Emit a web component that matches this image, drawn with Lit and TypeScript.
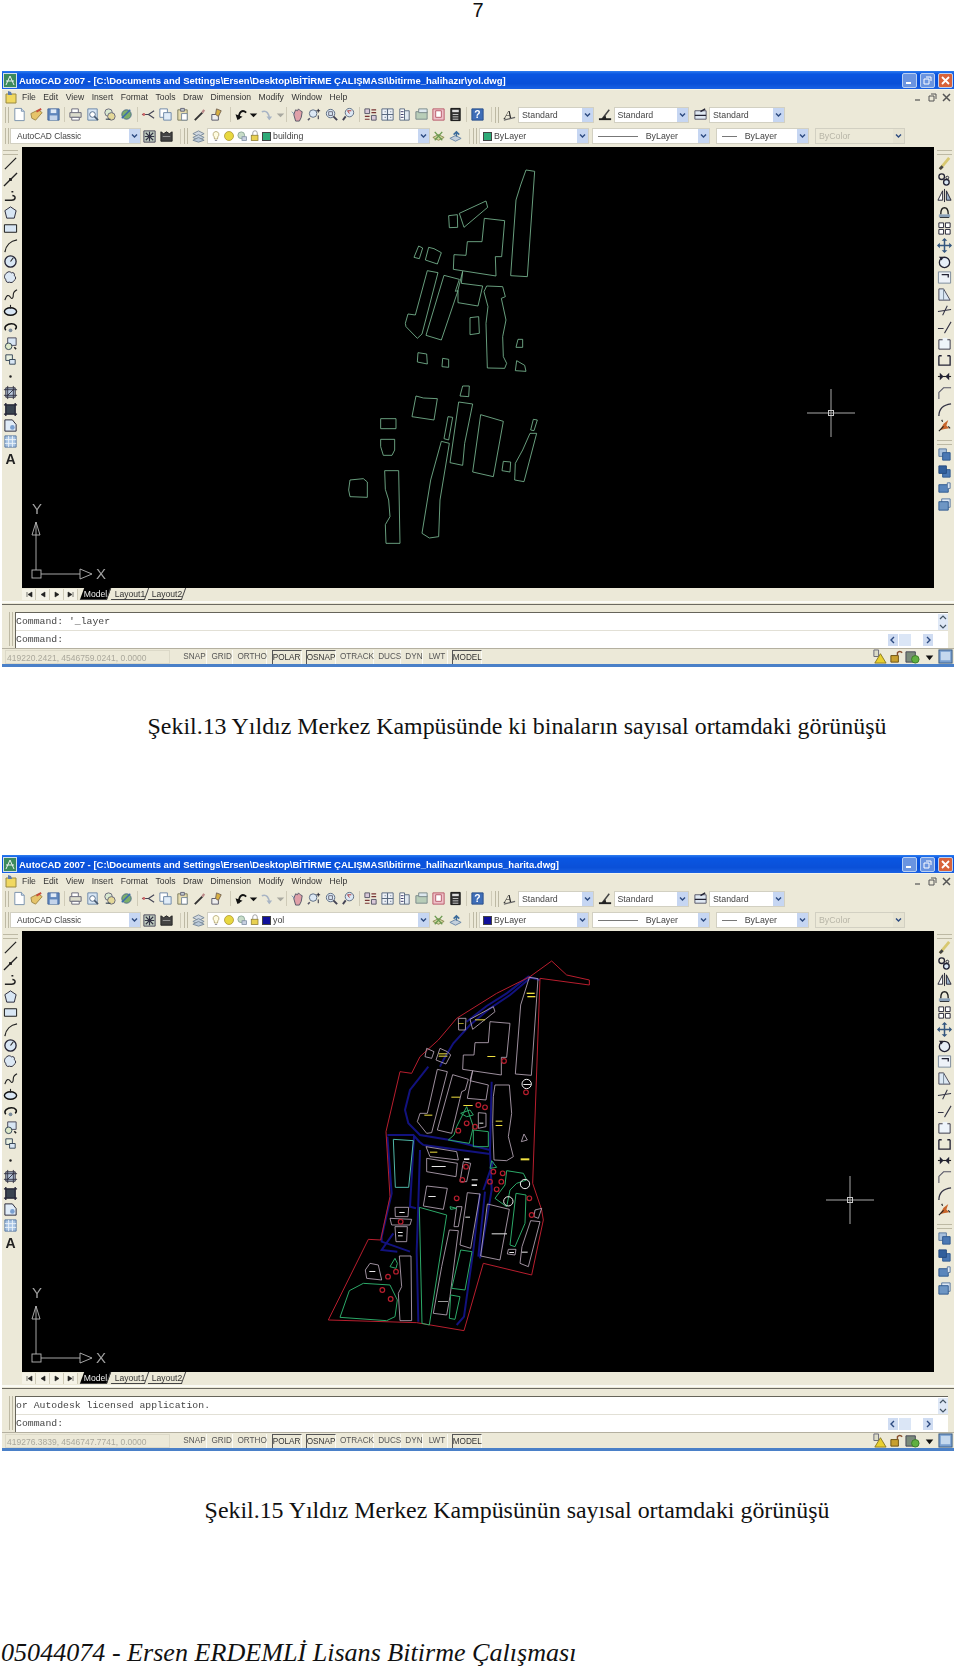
import { LitElement, html, css, svg } from 'lit'

const line = (d: string, w = 1.2, c = '#222') => svg`<path d=${d} fill="none" stroke=${c} stroke-width=${w}/>`
const box = (d: string, f: string, c = '#5a6a80') => svg`<path d=${d} fill=${f} stroke=${c} stroke-width="1"/>`

const ICONS: Record<string, any> = {
  // standard toolbar
  new: svg`${box('M3 1.5h7l3 3v10H3z', '#fff', '#7890ac')}${box('M10 1.5v3h3', '#d4e2f0', '#7890ac')}`,
  open: svg`${box('M2 7l8-4 4 3-7 8-4-2z', '#e6c46a', '#a08848')}${line('M8 5l5-3', 2, '#c84a3a')}`,
  save: svg`${box('M2 2h12v12H2z', '#5f86bc', '#44689c')}<rect x="5" y="2.5" width="6" height="4" fill="#e0eaf6"/><rect x="4" y="9" width="8" height="5" fill="#c4d4ea"/>`,
  plot: svg`${box('M4 6V2h7v4', '#fff', '#667')}${box('M2 6h12v5H2z', '#dcdccc', '#667')}${box('M4 11h8v3H4z', '#fff', '#667')}`,
  preview: svg`${box('M3 2h10v12H3z', '#d8e6f4', '#6a86a8')}<circle cx="8" cy="8" r="3" fill="#fff" stroke="#506a8a"/>${line('M10 10l4 4', 1.6, '#44556a')}`,
  publish3d: svg`<circle cx="7" cy="6" r="4" fill="#d8e8d0" stroke="#667"/><circle cx="10" cy="10" r="4" fill="#e4d898" stroke="#667"/>${line('M4 13h5', 1.2, '#345')}`,
  publish: svg`<circle cx="8" cy="8" r="5" fill="#7cae6a" stroke="#4a6a8a"/>${line('M3 12l9-9', 1.6, '#3a6ab0')}`,
  cut: svg`${line('M1 8h7M8 8l6-4M8 8l6 4', 1.2, '#445')}<circle cx="3" cy="8" r="1.5" fill="#c66"/>`,
  copy: svg`${box('M2 2h8v9H2z', '#fff', '#6c86a6')}${box('M6 6h8v8H6z', '#e0ecf8', '#6c86a6')}`,
  paste: svg`${box('M3 3h10v11H3z', '#e6dcae', '#7c7c60')}${box('M6 1.5h4v3H6z', '#c0c8d0', '#667')}${box('M7 7h6v7H7z', '#fff', '#7a8a9a')}`,
  match: svg`${line('M3 14l8-8', 2, '#333')}${line('M11 6l2-3', 2.4, '#b88')}`,
  blockedit: svg`${box('M3 8h7v6H3z', '#eee', '#556')}${box('M8 2l5 2-3 6-3-2z', '#d8b040', '#765')}`,
  undo: svg`${line('M13 6C9 2 5 5 5 13', 2, '#111')}<path d="M1 9l4 5 4-5z" fill="#111" transform="rotate(20 5 10)"/>`,
  redo: svg`${line('M3 5c5-2 8 2 8 8', 1.6, '#a8b4c4')}<path d="M8 10l3 4 3-4z" fill="#a8b4c4"/>`,
  dropDark: svg`<path d="M4 7h8l-4 4z" fill="#111"/>`,
  dropLight: svg`<path d="M4 7h8l-4 4z" fill="#a8a8a0"/>`,
  pan: svg`${box('M4 8l2-5 2 1 1-2 2 2 2 1-1 6-2 4H6z', '#e0a0a8', '#556')}${line('M2 5l3 3', 1, '#6a86a8')}`,
  zoomrt: svg`<circle cx="6.5" cy="7" r="4" fill="#dce8f4" stroke="#5a6a80"/>${line('M12 2v4M10 4h4M12 9v4', 1, '#223')}${line('M3 12l-2 2', 1.6, '#556')}`,
  zoomwin: svg`<circle cx="7" cy="7" r="4.5" fill="#dce8f4" stroke="#5a6a80"/>${line('M10 10l4 4', 2, '#445')}${line('M5 5h4v4H5z', 1, '#667')}`,
  zoomprev: svg`<circle cx="9" cy="6" r="4.5" fill="#dce8f4" stroke="#5a6a80"/>${line('M5 10l-3 4', 2, '#445')}${line('M11 4H7l2 3', 1, '#a33')}`,
  props: svg`${box('M2 2h5v5H2zM9 9h5v5H9z', '#d8c8d8', '#556')}${line('M9 3h5M9 6h5M2 10h5M2 13h5', 1.2, '#733')}`,
  dc: svg`${box('M2 2h12v12H2z', '#eef2f8', '#5a6a80')}${line('M2 8h12M8 2v12M5 5h1M11 5h1M5 11h1M11 11h1', 1.2, '#5a6a80')}`,
  palette: svg`${box('M3 2h5v12H3z', '#fff', '#5a6a80')}${box('M8 4h5v10H8z', '#e0e8f0', '#5a6a80')}${line('M4 5h3M4 8h3M4 11h3', 1, '#336')}`,
  sheet: svg`${box('M2 5h12v8H2z', '#b8cdb8', '#7a8a8a')}${box('M5 2h9v4H5z', '#dde8ee', '#7a8a8a')}`,
  markup: svg`${box('M2 2h12v12H2z', '#eec0c8', '#b85868')}${box('M5 4h6v7H5z', '#fff', '#b85868')}`,
  calc: svg`${box('M3 1.5h10v13H3z', '#333', '#111')}<rect x="4.5" y="3" width="7" height="2.5" fill="#ddd"/>${line('M5 8h6M5 10.5h6M5 13h6', 1, '#ccc')}`,
  help: svg`${box('M2 2h12v12H2z', '#3f6eb8', '#2a4f8a')}<text x="8" y="12" text-anchor="middle" font-size="11" font-weight="700" font-family="Liberation Sans" fill="#fff">?</text>`,
  textstyle: svg`<text x="2" y="13" font-size="14" font-style="italic" font-family="Liberation Serif" fill="#222">A</text>${line('M2 14l12-3', 1.4, '#666')}`,
  dimstyle: svg`${line('M1 13h13', 2, '#222')}${line('M5 12l7-9', 1.6, '#444')}<path d="M3 13l5-4 1 4z" fill="#222"/>`,
  tablestyle: svg`${box('M2 4h12v9H2z', '#dfe8f2', '#556')}${line('M8 5l5-3M2 9h12', 1.4, '#223')}`,
  // layers and workspace
  wsSettings: svg`${box('M2 2h12v12H2z', '#c0ccc0', '#445')}${line('M4 4l8 8M12 4l-8 8M8 3v10M3 8h10', 1.2, '#334')}`,
  wsLock: svg`<path d="M2 3l3 2 3-2 3 2 3-2v10H2z" fill="#444" stroke="#222"/>${line('M4 8h8', 1, '#999')}`,
  layerPanel: svg`${box('M8 2l6 3-6 3-6-3z', '#d0d8e0', '#7a8a9a')}${box('M8 6l6 3-6 3-6-3z', '#c4d0dc', '#7a8a9a')}${box('M8 9l6 3-6 2-6-2z', '#b8c8d8', '#7a8a9a')}`,
  layerMake: svg`${box('M8 6l6 3-6 3-6-3z', '#d0d8a0', '#8a8a50')}${line('M4 3l8 9M12 3l-8 9', 1.4, '#6a9a50')}`,
  layerPrev: svg`${box('M8 7l6 3-6 3-6-3z', '#c4d0dc', '#6a86a8')}${line('M6 6l3-3 3 3M9 3v5', 1.6, '#3a6a9a')}`,
  bulb: svg`<path d="M8 2a4 4 0 0 1 2.5 7L10 12H6L5.5 9A4 4 0 0 1 8 2z" fill="#fffce0" stroke="#a89a60"/>${line('M6.5 14h3', 1.2, '#889')}`,
  sun: svg`<circle cx="8" cy="8" r="6" fill="#e8d840" stroke="#a89030"/>`,
  freeze: svg`<circle cx="7" cy="7" r="4.5" fill="#c8dcc8" stroke="#7a9a8a"/><rect x="8" y="9" width="6" height="5" fill="#c8d0e0" stroke="#7a8aa0"/>`,
  padlock: svg`<path d="M5 7V4a3 3 0 0 1 6 0v3" fill="none" stroke="#888"/><rect x="3" y="7" width="9" height="7" fill="#e8d050" stroke="#8a7a30"/>`,
  // draw toolbar
  lineTool: line('M2 14L14 2', 1.4),
  xline: svg`${line('M1 15L15 1', 1.4)}<rect x="6.5" y="6.5" width="3" height="3" fill="#222"/>`,
  pline: line('M2 13h7c5 0 5-5 1-5M9 4h2', 1.6),
  polygon: box('M8 2l6 4-2 8H4L2 6z', '#d8e6f4', '#223'),
  rect: box('M1.5 4h13v8h-13z', '#d8e6f4', '#111'),
  arc: line('M2 15C3 8 8 3 15 2', 1.4),
  circle: svg`<circle cx="8" cy="8" r="6" fill="#d8e6f4" stroke="#223" stroke-width="1.4"/>${line('M8 8l3-4', 1.2)}`,
  cloud: box('M4 3c2-2 4-1 5 0 2-1 4 1 3 3 2 1 2 4 0 5-1 2-3 3-5 2-3 1-4-1-4-3-2-1-2-5 1-7z', '#dce8f4', '#223'),
  spline: line('M2 14c2-6 4-6 6-3s3 0 3-3 2-4 4-5', 1.2),
  ellipse: svg`<ellipse cx="8" cy="9" rx="6.5" ry="4" fill="#d8e6f4" stroke="#111" stroke-width="1.5"/>${line('M8 2v4', 1.2)}`,
  ellipseArc: svg`<path d="M3 11C0 7 5 4 9 4s7 3 4 6" fill="none" stroke="#111" stroke-width="1.6"/><circle cx="8" cy="11" r="2" fill="#7a8a9a"/>`,
  insert: svg`${box('M5 2h9v8H5z', '#d8e6f4', '#445')}<circle cx="6" cy="11" r="3.5" fill="#dce8c8" stroke="#345"/>${line('M12 12l2 2', 1.6)}`,
  block: svg`${box('M3 3h7v6H3z', '#e8f0e0', '#345')}${box('M7 8h6v5H7z', '#d8e6f4', '#345')}`,
  point: svg`<circle cx="8" cy="8" r="1.3" fill="#222"/>`,
  hatch: svg`${box('M3 3h10v10H3z', '#b8c8dc', '#223')}${line('M1 5h14M1 11h14M5 1v14M11 1v14M4 12l8-8', 1, '#334')}`,
  gradient: svg`<rect x="3" y="3" width="10" height="10" fill="#3a4450"/>${line('M1 3h14M1 13h14M3 1v14M13 1v14', 1.4, '#223')}`,
  region: svg`${box('M2 2h8l4 5v7H2z', '#e0ecf8', '#223')}<circle cx="10" cy="10" r="2.5" fill="#7aa0d0"/>`,
  table: svg`${box('M2 2h12v12H2z', '#a8c4e4', '#5a78a0')}${line('M2 6h12M2 10h12M6 2v12M10 2v12', 1, '#eef4fa')}`,
  mtext: svg`<text x="8" y="14" text-anchor="middle" font-size="15" font-weight="700" font-family="Liberation Sans" fill="#222">A</text>`,
  // modify toolbar
  erase: svg`${line('M3 14L13 2', 3, '#d8c870')}${line('M3 14l3-3', 3, '#444')}`,
  copyObj: svg`<circle cx="5" cy="5" r="3" fill="none" stroke="#223" stroke-width="1.4"/><circle cx="10" cy="11" r="3" fill="#d8e6f4" stroke="#223" stroke-width="1.4"/><circle cx="11" cy="6" r="1.5" fill="none" stroke="#223"/>`,
  mirror: svg`${box('M1 13l5-10v10z', '#fff', '#223')}${box('M15 13l-5-10v10z', '#9ab0c8', '#223')}${line('M8 1v14', 1, '#223')}`,
  offset: svg`${line('M3 13h10M4 10c0-5 1-7 4-7s4 2 4 7', 1.5)}<rect x="2" y="10" width="12" height="3" fill="#8aa0b8"/>`,
  array: svg`${box('M2 2h5v5H2zM9 2h5v5H9zM2 9h5v5H2zM9 9h5v5H9z', '#fff', '#223')}`,
  move: svg`${line('M8 1v14M1 8h14', 1.6, '#35577f')}<path d="M8 0l3 3H5zM8 16l3-3H5zM0 8l3-3v6zM16 8l-3-3v6z" fill="#35577f"/>`,
  rotate: svg`<circle cx="8" cy="9" r="5.5" fill="#e6eef8" stroke="#223" stroke-width="1.4"/><path d="M2 3l5 0-2 4z" fill="#223"/>`,
  scale: svg`${box('M1.5 2h13v12h-13z', '#eef2f8', '#7a8a9a')}${line('M5 5h7v3', 1.4, '#223')}`,
  stretch: svg`${box('M2 2h5l7 12H2z', '#dce8f4', '#445')}${line('M7 2v12', 1, '#7a8a9a')}`,
  trim: line('M1 9l14-2M11 3L6 13', 1.1, '#334'),
  extend: line('M1 9h6M15 2L8 14', 1.1, '#334'),
  brk: svg`${box('M2 4h12v10H2z', '#eef4fa', '#334')}<rect x="6" y="2" width="5" height="4" fill="#eef4fa"/>`,
  brkPt: svg`${line('M2 4v10h12V4M2 4h3M11 4h3', 1.4, '#223')}`,
  join: svg`${line('M1 8h14', 1.2)}<path d="M3 4v8l4-4zM13 4v8l-4-4z" fill="#223"/>`,
  chamfer: line('M2 15V8l5-5h8', 1.1, '#556'),
  fillet: line('M2 15c0-8 5-12 13-13', 1.4, '#334'),
  explode: svg`<path d="M3 13l4-7 5-4-2 6 3 3-6 1z" fill="#c8642a"/>${line('M2 14l5-5M6 4l-1-2M12 9l2 2', 1.2, '#222')}`,
  // draw order
  front: svg`${box('M2 2h8v8H2z', '#a8c0dc', '#5a78a0')}${box('M6 6h8v8H6z', '#4a78b4', '#2f5a90')}`,
  back: svg`${box('M6 6h8v8H6z', '#4a78b4', '#2f5a90')}${box('M2 2h8v8H2z', '#315f9c', '#264c80')}`,
  above: svg`${box('M2 5h10v8H2z', '#5a86bc', '#2f5a90')}${box('M11 3h3v6h-3z', '#dde8f4', '#5a78a0')}`,
  under: svg`${box('M5 2h9v9H5z', '#dde8f4', '#5a78a0')}${box('M2 5h10v9H2z', '#6e96c4', '#2f5a90')}`,
  // status tray
  tray1: svg`${box('M2 1h5v7H2z', '#dcdcc8', '#667')}<path d="M9 5l6 10H3z" fill="#e8d030" stroke="#8a7a20"/>`,
  tray2: svg`${box('M2 7h8v7H2z', '#c8a030', '#6a5010')}${line('M9 7V4a3 3 0 0 1 5 0', 1.5, '#885030')}`,
  tray3: svg`${box('M1 3h10v11H1z', '#7a8a7a', '#445')}<circle cx="11" cy="11" r="4" fill="#60b040" stroke="#3a7a28"/>`,
  tray4: svg`<path d="M4 7h8l-4 5z" fill="#111"/>`,
  tray5: svg`<rect x="1" y="1" width="14" height="14" fill="#7aa0d0" stroke="#35577f"/><rect x="3" y="3" width="10" height="9" fill="#c4d8ee"/>`,
}

const TOP_TOOLS = [
  ['new', 'open', 'save'],
  ['plot', 'preview', 'publish3d', 'publish'],
  ['cut', 'copy', 'paste', 'match', 'blockedit'],
]
const VIEW_TOOLS = [
  ['pan', 'zoomrt', 'zoomwin', 'zoomprev'],
  ['props', 'dc', 'palette', 'sheet', 'markup', 'calc'],
  ['help'],
]
const DRAW_TOOLS = ['lineTool', 'xline', 'pline', 'polygon', 'rect', 'arc', 'circle', 'cloud', 'spline', 'ellipse', 'ellipseArc', 'insert', 'block', 'point', 'hatch', 'gradient', 'region', 'table', 'mtext']
const MODIFY_TOOLS = ['erase', 'copyObj', 'mirror', 'offset', 'array', 'move', 'rotate', 'scale', 'stretch', 'trim', 'extend', 'brk', 'brkPt', 'join', 'chamfer', 'fillet', 'explode']
const ORDER_TOOLS = ['front', 'back', 'above', 'under']
const MENU = ['File', 'Edit', 'View', 'Insert', 'Format', 'Tools', 'Draw', 'Dimension', 'Modify', 'Window', 'Help']
const STATUS = [
  ['SNAP', 'snap', false], ['GRID', 'grid', false], ['ORTHO', 'ortho', false], ['POLAR', 'polar', true], ['OSNAP', 'osnap', true],
  ['OTRACK', 'otrack', false], ['DUCS', 'ducs', false], ['DYN', 'dyn', false], ['LWT', 'lwt', false], ['MODEL', 'model', true],
]

const tool = (name: string, cls = '') => html`<span class="tool ${cls}"><svg viewBox="0 0 16 16">${ICONS[name]}</svg></span>`
const plainTool = (name: string) => tool(name)

const BUILDINGS = 'M588 60 614 64 592 380 542 377 558 150 572 105ZM388 190 468 153 473 172 402 232ZM356 197 382 194 383 232 358 233ZM463 205 524 212 515 320 496 320 498 378 370 358 372 314 408 316 412 275 456 275ZM398 364 394 400 458 408 444 468 384 458 384 420ZM266 288 278 294 268 326 252 322ZM296 292 312 296 334 308 322 342 286 330ZM292 362 324 368 276 552 262 565 228 530 226 520 234 492 256 495ZM342 376 388 388 376 424 384 422 334 570 288 556ZM470 408 518 410 526 440 514 445 528 510 518 560 520 620 530 640 524 655 472 654 468 520 474 470 462 425ZM420 503 446 500 448 550 420 554ZM564 568 578 568 578 592 558 592ZM560 632 584 646 588 664 556 662ZM264 608 290 612 292 642 262 636ZM338 625 356 628 356 652 336 650ZM398 708 418 708 416 740 390 738ZM258 738 280 744 322 746 312 810 246 800ZM152 806 198 806 198 836 152 836ZM152 868 194 868 194 900 186 916 160 916 152 890ZM60 990 100 986 112 996 112 1042 60 1040 56 1020ZM164 962 206 962 210 1180 168 1180 166 1124 180 1100 176 1050 166 1018ZM386 756 428 762 404 880 398 946 360 938ZM354 800 368 802 356 870 342 866ZM334 874 358 880 330 1050 326 1160 298 1164 276 1150 302 990ZM452 794 520 814 490 980 428 966ZM520 934 542 936 540 966 516 962ZM600 850 620 850 582 995 554 990 556 940 578 900ZM610 808 622 810 612 842 602 840Z'

const YOL_ROADS = 'M660 85 600 135 540 175 480 225 430 280 400 330 390 350M690 90 655 80 590 130 530 168 470 215M355 350 300 420 285 480 295 520 330 555 420 570 540 600M545 395 540 600 545 720 510 925M232 555 310 555 328 575 340 585M330 600 325 760 320 905 325 1115M232 560 245 730 215 860 215 875 300 905M510 730 490 900 462 1100 440 1125M550 635 520 720M340 585 540 612M312 560 300 770 318 775M525 725 505 920M250 850 215 900 262 905'
const YOL_BOUNDARY = 'M55 1110 175 868 212 870 240 740 228 545 270 365 305 370 330 320 385 270 440 205 560 130 660 80 725 33 770 75 838 90 838 105 690 85 668 700 695 780 700 810 665 975 520 940 462 1142 320 1118Z'
const YOL_BUILDINGS = 'M658 82 684 86 664 376 616 372 632 165ZM480 208 550 170 555 185 488 238ZM445 205 468 205 466 240 446 240ZM540 215 600 220 590 322 574 322 574 375 458 358 460 315 492 315 495 278 535 278ZM350 295 372 305 365 325 345 320ZM390 295 412 305 422 315 408 342 378 330ZM382 358 412 365 365 548 350 550 322 515 330 490 352 490ZM428 374 475 388 466 420 455 425 425 550 382 540ZM488 362 480 392 535 405 528 450 472 445ZM555 405 598 405 605 490 595 560 610 620 590 632 552 630 548 520 550 440ZM505 488 528 490 528 530 505 535ZM642 552 652 570 634 575ZM348 590 440 605 445 630 360 620ZM350 625 442 640 438 680 350 665ZM460 635 482 640 470 695 450 695ZM350 708 412 715 400 778 340 768ZM255 772 296 772 294 800 256 800ZM240 805 305 808 300 825 245 825ZM255 830 292 830 290 875 258 875ZM268 918 303 918 305 1112 270 1112 265 1030 275 1010ZM180 940 205 945 215 990 170 985 166 960ZM472 728 510 732 482 895 450 885ZM440 770 456 770 445 830 432 830ZM418 840 445 842 420 1040 410 1095 370 1090 395 950ZM532 762 598 778 570 930 512 918ZM595 898 618 898 615 915 592 912ZM662 812 690 815 655 950 630 940 636 890ZM675 780 695 775 685 805 672 800Z'
const YOL_GREEN = 'M328 772 410 795 358 1125 336 1120ZM118 1022 160 1000 240 1005 262 1050 255 1100 230 1112 90 1102ZM452 900 486 905 465 1020 425 1015ZM422 1035 450 1040 435 1108 418 1105ZM618 730 648 735 645 820 615 890 600 885ZM590 662 640 670 650 690 620 700 600 720 590 770 555 745 585 705ZM470 470 460 490 440 530 432 555 415 570 478 580 490 530ZM490 540 535 545 535 590 490 590ZM545 632 560 652 540 655ZM420 770 440 775 422 778ZM452 490 480 480 490 495 470 500ZM240 950 255 925 262 940 258 955Z'
const YOL_LAWN = 'M250 568 310 572 296 712 256 712Z'
const RED_DOTS = [[582, 333], [648, 427], [505, 465], [525, 472], [470, 520], [495, 530], [445, 542], [468, 650], [457, 690], [550, 665], [578, 670], [540, 695], [574, 695], [560, 718], [658, 745], [665, 795], [440, 745], [272, 815], [258, 965], [234, 980], [217, 1020], [242, 1047]]
const WHITE_RINGS = [[650, 402], [645, 702], [595, 754]]
const YELLOW_TAGS = [[650, 128, 24, 4], [652, 138, 24, 4], [495, 208, 30, 3], [532, 318, 24, 3], [424, 440, 26, 3], [343, 494, 24, 3], [460, 465, 28, 3], [557, 512, 20, 3], [557, 525, 20, 3], [386, 310, 26, 3], [386, 317, 26, 3], [632, 625, 26, 6], [445, 220, 16, 2], [360, 605, 22, 3]]
const WHITE_TAGS = [[365, 648, 42, 3], [545, 850, 46, 3], [178, 963, 18, 3], [640, 402, 22, 3], [355, 738, 22, 3], [268, 786, 16, 3], [264, 846, 14, 3], [264, 856, 14, 3], [598, 906, 14, 3], [635, 905, 18, 3], [466, 800, 14, 3], [384, 1053, 30, 2], [508, 518, 12, 3], [485, 688, 18, 3], [485, 703, 16, 5], [462, 625, 16, 5]]

const ucs = svg`
  <g class="ucs">
    <rect x="32" y="570" width="9" height="8"/>
    <path d="M36 570V522M41 574H80M32 535 36 522 40 535ZM80 569 92 574 80 579Z"/>
    <text x="96" y="579">X</text>
    <text x="32" y="514">Y</text>
  </g>`

const cross = (x: number, y: number) => svg`
  <g class="cross">
    <path d=${`M${x - 24} ${y}H${x + 24}M${x} ${y - 24}V${y + 24}`}/>
    <rect x=${x - 2.5} y=${y - 2.5} width="5" height="5"/>
  </g>`

const PLAN_BUILDING = svg`
  <g transform="translate(330 150) scale(.33333)">
    <path class="pale" d=${BUILDINGS}/>
  </g>`

const PLAN_CAMPUS = svg`
  <g transform="translate(310 166) scale(.33333)">
    <path class="road" d=${YOL_ROADS}/>
    <path class="bound" d=${YOL_BOUNDARY}/>
    <path class="house" d=${YOL_BUILDINGS}/>
    <path class="green" d=${YOL_GREEN}/>
    <path class="lawn" d=${YOL_LAWN}/>
    ${RED_DOTS.map(([x, y]) => svg`<circle class="tree" cx=${x} cy=${y} r="7"/>`)}
    ${WHITE_RINGS.map(([x, y]) => svg`<circle class="ring" cx=${x} cy=${y} r="14"/>`)}
    ${YELLOW_TAGS.map(([x, y, w, h]) => svg`<rect fill="#f0e040" x=${x} y=${y} width=${w} height=${h}/>`)}
    ${WHITE_TAGS.map(([x, y, w, h]) => svg`<rect fill="#e8e8e8" x=${x} y=${y} width=${w} height=${h}/>`)}
  </g>`

class CadWindow extends LitElement {
  static properties = {
    file: { type: String },
    layer: { type: String },
    swatch: { type: String },
    history: { type: String },
    coords: { type: String },
    plan: { type: String },
  }

  constructor() {
    super()
    this.file = ''
    this.layer = ''
    this.swatch = ''
    this.history = ''
    this.coords = ''
    this.plan = 'building'
  }

  static styles = css`
    :host {
      display: block;
      width: 952px;
      height: 596px;
      margin-left: 2px;
      background: #ece9d8;
      font-family: "Liberation Sans", Arial, sans-serif;
      font-size: 8.6px;
      color: #333;
      filter: blur(0.4px);
    }

    .title {
      height: 18px;
      display: flex;
      align-items: center;
      gap: 2px;
      padding: 0 1px;
      background: linear-gradient(#2f7ff0 0, #0a56e2 3px, #0a50d8 70%, #1a62e4 100%);
      color: #fff;
      font-size: 9.5px;
      font-weight: 700;
      white-space: nowrap;
    }

    .app-icon {
      width: 14px;
      height: 15px;
      flex: none;
    }

    .caption-text {
      flex: 1;
      overflow: hidden;
    }

    .win-btn {
      width: 15px;
      height: 15px;
      flex: none;
      border-radius: 2px;
      border: 1px solid #b8d0f4;
      background: #6a94e0;
      box-sizing: border-box;
      margin-left: 1px;
    }

    .win-btn svg {
      display: block;
      width: 100%;
      height: 100%;
    }

    .win-btn.close {
      background: #d8623a;
    }

    .menu {
      height: 15px;
      display: flex;
      align-items: center;
      padding-left: 3px;
      border-top: 1px solid #f6f4ea;
      box-sizing: border-box;
    }

    .menu-items {
      display: flex;
      gap: 7.5px;
      margin-left: 3px;
      flex: 1;
    }

    .doc-btns {
      display: flex;
      gap: 5px;
      margin-right: 3px;
      color: #555;
    }

    .doc-btns svg {
      display: block;
      width: 9px;
      height: 9px;
    }

    .bar {
      display: flex;
      align-items: center;
      padding-left: 3px;
    }

    .bar.one {
      height: 21px;
    }

    .bar.two {
      height: 22px;
    }

    .grip {
      width: 2px;
      height: 16px;
      flex: none;
      border-left: 1px solid #bdb9a4;
      border-right: 1px solid #bdb9a4;
      margin-right: 2px;
    }

    .bar.two > .combo.workspace {
      margin-left: -1px;
    }

    .group {
      display: flex;
      flex: none;
    }

    .sep {
      width: 1px;
      height: 15px;
      flex: none;
      background: #cfcbb8;
      margin: 0 2px;
    }

    .sep.wide {
      margin: 0 3px 0 5px;
    }

    .tool {
      width: 17px;
      height: 16px;
      flex: none;
      display: flex;
      align-items: center;
      justify-content: center;
    }

    .tool svg {
      width: 15px;
      height: 15px;
      display: block;
      flex: none;
    }

    .tool.undo {
      width: 15px;
    }

    .tool.redo {
      width: 19px;
    }

    .tool.drop {
      width: 8px;
    }

    .combo {
      height: 16px;
      display: flex;
      align-items: center;
      background: #fff;
      border: 1px solid #d2d0c2;
      box-sizing: border-box;
      flex: none;
      color: #444;
      font-size: 8.8px;
      padding-left: 3px;
    }

    .combo .value {
      flex: 1;
      white-space: nowrap;
      display: flex;
      align-items: center;
      gap: 2px;
    }

    .combo .arrow {
      width: 11px;
      height: 14px;
      flex: none;
      background: #c6d6f2;
      display: flex;
      align-items: center;
      justify-content: center;
    }

    .combo .arrow svg {
      width: 7px;
      height: 6px;
      display: block;
    }

    .combo.off {
      background: #ece9d8;
      color: #b8b6a8;
    }

    .combo.off .arrow {
      background: #e6e3d2;
    }

    .workspace {
      width: 131px;
      padding-left: 6px;
      font-size: 8.4px;
    }

    .layers {
      width: 223px;
      padding-left: 2px;
    }

    .layers .tool {
      width: 11px;
    }

    .layers .tool svg {
      width: 12px;
      height: 12px;
    }

    .swatch {
      width: 7px;
      height: 7px;
      flex: none;
      border: 1px solid #444;
    }

    .swatch.green-sw {
      background: #2eaa78;
    }

    .swatch.blue-sw {
      background: #10109a;
    }

    .style-box {
      width: 75.5px;
    }

    .color {
      width: 110px;
    }

    .ltype {
      width: 118px;
    }

    .lweight {
      width: 93px;
    }

    .plotstyle {
      width: 90px;
    }

    .rule {
      flex: 1;
      height: 1px;
      background: #777;
      margin: 0 6px 0 2px;
    }

    .ltype .value,
    .lweight .value {
      padding-right: 20px;
    }

    .gap-s {
      width: 3px;
      flex: none;
    }

    .gap-m {
      width: 6px;
      flex: none;
    }

    .body {
      display: grid;
      grid-template-columns: 20px 912px 20px;
      height: 453px;
    }

    .palette {
      display: flex;
      flex-direction: column;
      align-items: center;
      box-sizing: border-box;
    }

    .palette.left {
      padding-right: 4px;
    }

    .palette .handle {
      width: 15px;
      height: 3px;
      flex: none;
      border-top: 1px solid #bdb9a4;
      border-bottom: 1px solid #bdb9a4;
      margin-top: 3px;
    }

    .palette .tool {
      width: 16px;
      height: 16.4px;
    }

    .palette .second {
      margin: 6px 0 2px;
    }

    .canvas {
      width: 912px;
      height: 441px;
      background: #000;
      display: block;
    }

    .canvas path,
    .canvas circle {
      fill: none;
      vector-effect: non-scaling-stroke;
    }

    .pale {
      stroke: #7ab892;
      stroke-width: 0.85;
    }

    .road {
      stroke: #12127e;
      stroke-width: 2;
    }

    .bound {
      stroke: #b81e2e;
      stroke-width: 1;
    }

    .house {
      stroke: #b8a8b8;
      stroke-width: 0.85;
    }

    .green {
      stroke: #2ca868;
      stroke-width: 1;
    }

    .lawn {
      stroke: #50b8a8;
      stroke-width: 1;
    }

    .canvas .tree {
      stroke: #b81e2e;
      stroke-width: 1.2;
    }

    .canvas .ring {
      stroke: #f0f0f0;
      stroke-width: 1;
    }

    .ucs rect,
    .ucs path {
      fill: none;
      stroke: #b8b8b8;
      stroke-width: 0.9;
    }

    .ucs text {
      fill: #a0a0a0;
      font-size: 15px;
      font-family: "Liberation Sans", sans-serif;
    }

    .cross path {
      stroke: #a8a8a8;
      stroke-width: 1;
    }

    .cross rect {
      fill: none;
      stroke: #c8c8c8;
      stroke-width: 1;
    }

    .tabs {
      height: 12px;
      display: flex;
      align-items: center;
      font-size: 8.6px;
    }

    .nav {
      width: 14px;
      height: 11px;
      flex: none;
      box-sizing: border-box;
      border-right: 1px solid #cfcbb8;
      display: flex;
      align-items: center;
      justify-content: center;
      background: #f4f2e6;
    }

    .nav svg {
      display: block;
      width: 8px;
      height: 7px;
    }

    .tab {
      height: 12px;
      line-height: 12px;
      width: 34px;
      text-align: center;
      margin-right: 3px;
      white-space: nowrap;
      box-sizing: border-box;
      position: relative;
    }

    .tab::before {
      content: "";
      position: absolute;
      inset: 0;
      border-right: 1px solid #444;
      border-bottom: 1px solid #444;
      transform: skewX(-20deg);
      z-index: -1;
    }

    .tab.active {
      color: #eee;
      width: 27px;
      margin: 0 4px;
    }

    .tab.active::before {
      background: #000;
    }

    .tabs,
    .tab {
      isolation: isolate;
    }

    .strip {
      height: 4px;
      background: linear-gradient(#ece9d8 0, #ece9d8 1px, #fafaf4 1px, #fafaf4 3px, #ece9d8 3px);
    }

    .dock {
      height: 44px;
      border-top: 1.5px solid #6c6a60;
      box-sizing: border-box;
      padding: 7px 0 0 7px;
      display: flex;
    }

    .dock .grip {
      height: 34px;
    }

    .cmd {
      flex: 1;
      border-top: 1.5px solid #66645a;
      border-left: 1px solid #66645a;
      font-family: "Liberation Mono", monospace;
      font-size: 9.8px;
      color: #444;
      display: flex;
      flex-direction: column;
      box-sizing: border-box;
      height: 36px;
      margin-right: 6px;
      background: #fff;
    }

    .cmd-line {
      height: 17px;
      line-height: 16px;
      box-sizing: border-box;
      display: flex;
      align-items: center;
      white-space: pre;
    }

    .cmd-line.first {
      border-bottom: 1px solid #e2e0d6;
      height: 18px;
    }

    .cmd-line .text {
      flex: 1;
    }

    .scroll {
      width: 10px;
      height: 16px;
      flex: none;
      background: #dfe8f6;
      display: flex;
      flex-direction: column;
      align-items: center;
      justify-content: space-around;
    }

    .hscroll {
      display: flex;
      align-items: center;
      background: #fff;
      margin-right: 13px;
      height: 13px;
      width: 47px;
      flex: none;
    }

    .hscroll span {
      display: block;
      width: 10px;
      height: 12px;
      background: #cfdcf2;
    }

    .hscroll span.pad {
      width: 12px;
      background: #fff;
    }

    .hscroll span.thumb {
      width: 12px;
      background: #dbe6f6;
      margin-left: 1px;
    }

    .hscroll span svg,
    .scroll svg {
      display: block;
      width: 10px;
      height: 6px;
    }

    .hscroll span svg {
      height: 12px;
    }

    .status {
      height: 16px;
      border-top: 1.5px solid #b4b0a0;
      box-sizing: border-box;
      display: flex;
      align-items: center;
      padding-left: 3px;
      font-size: 8.2px;
    }

    .coords {
      width: 165px;
      height: 14px;
      line-height: 14px;
      border: 1px solid #dcd9c8;
      box-sizing: border-box;
      color: #aaa89c;
      padding-left: 1px;
      font-size: 8.5px;
      margin-right: 13px;
      flex: none;
    }

    .toggle {
      height: 14px;
      line-height: 14px;
      text-align: center;
      flex: none;
      box-sizing: border-box;
      margin-right: 4.2px;
      border-right: 1px solid #fafaf4;
      color: #555;
    }

    .toggle.on {
      border-top: 1px solid #555;
      border-left: 1px solid #555;
      color: #333;
    }

    .snap { width: 24px; }
    .grid { width: 22px; }
    .ortho { width: 30px; }
    .polar { width: 30px; }
    .osnap { width: 30px; }
    .otrack { width: 34px; }
    .ducs { width: 23px; }
    .dyn { width: 18px; }
    .lwt { width: 20px; }
    .model { width: 30px; }

    .tray {
      margin-left: auto;
      display: flex;
    }

    .tray .tool {
      width: 16.5px;
    }

    .frame-foot {
      height: 3px;
      background: #4a80c8;
    }
  `

  renderTop() {
    return TOP_TOOLS.map((g, i) => html`
      ${i ? html`<span class="sep"></span>` : ''}
      <span class="group">${g.map(plainTool)}</span>`)
  }

  renderView() {
    return VIEW_TOOLS.map((g) => html`
      <span class="sep"></span>
      <span class="group">${g.map(plainTool)}</span>`)
  }

  arrow() {
    return html`<span class="arrow"><svg viewBox="0 0 7 6"><path d="M1 1.5l2.5 2.5L6 1.5" fill="none" stroke="#2c4a80" stroke-width="1.4"/></svg></span>`
  }

  combo(cls: string, value: unknown) {
    return html`<span class="combo ${cls}"><span class="value">${value}</span>${this.arrow()}</span>`
  }

  render() {
    const nav = ['M2 1v5M7 1L3 3.5 7 6z', 'M6 1L2 3.5 6 6z', 'M2 1l4 2.5L2 6z', 'M1 1l4 2.5L1 6zM6 1v5']
    return html`
      <div class="title">
        <svg class="app-icon" viewBox="0 0 14 15">
          <rect x=".5" y=".5" width="13" height="14" fill="#3c8a5c" stroke="#cfe0ea"/>
          <path d="M3 12 7 3l4 9M3 8h8" stroke="#e8eef0" fill="none"/>
        </svg>
        <span class="caption-text">AutoCAD 2007 - [C:\\Documents and Settings\\Ersen\\Desktop\\BİTİRME ÇALIŞMASI\\bitirme_halihazır\\${this.file}.dwg]</span>
        <span class="win-btn"><svg viewBox="0 0 13 13"><rect x="3" y="8" width="5" height="2" fill="#fff"/></svg></span>
        <span class="win-btn"><svg viewBox="0 0 13 13"><path d="M5 3h5v4M3 5h5v5H3z" fill="none" stroke="#fff"/></svg></span>
        <span class="win-btn close"><svg viewBox="0 0 13 13"><path d="M3 3l7 7M10 3l-7 7" stroke="#fff" stroke-width="1.8"/></svg></span>
      </div>
      <div class="menu">
        <svg width="14" height="14" viewBox="0 0 14 14">
          <path d="M1 4h10v9H1z" fill="#f0d860" stroke="#9a8a40"/>
          <path d="M3 1l3 1 1 3H3z" fill="#5a7ab0"/>
        </svg>
        <span class="menu-items">${MENU.map((m) => html`<span>${m}</span>`)}</span>
        <span class="doc-btns">
          <svg viewBox="0 0 9 9"><path d="M1 7h5" stroke="#555" stroke-width="1.2"/></svg>
          <svg viewBox="0 0 9 9"><path d="M3 1h5v5M1 3h5v5H1z" fill="none" stroke="#555"/></svg>
          <svg viewBox="0 0 9 9"><path d="M1 1l7 7M8 1L1 8" stroke="#555" stroke-width="1.5"/></svg>
        </span>
      </div>
      <div class="bar one">
        <span class="grip"></span>
        ${this.renderTop()}
        <span class="sep wide"></span>
        ${tool('undo', 'undo')}${tool('dropDark', 'drop')}
        ${tool('redo', 'redo')}${tool('dropLight', 'drop')}
        ${this.renderView()}
        <span class="sep wide"></span>
        <span class="grip"></span>
        ${tool('textstyle')}
        ${this.combo('style-box', 'Standard')}
        <span class="gap-s"></span>
        ${tool('dimstyle')}
        ${this.combo('style-box', 'Standard')}
        <span class="gap-s"></span>
        ${tool('tablestyle')}
        ${this.combo('style-box', 'Standard')}
      </div>
      <div class="bar two">
        <span class="grip"></span>
        ${this.combo('workspace', 'AutoCAD Classic')}
        ${tool('wsSettings')}
        ${tool('wsLock')}
        <span class="sep wide"></span>
        <span class="grip"></span>
        ${tool('layerPanel')}
        ${this.combo('layers', html`
          ${tool('bulb')}${tool('sun')}${tool('freeze')}${tool('padlock')}
          <span class="swatch ${this.swatch}"></span>${this.layer}`)}
        ${tool('layerMake')}
        ${tool('layerPrev')}
        <span class="sep wide"></span>
        <span class="grip"></span>
        ${this.combo('color', html`<span class="swatch ${this.swatch}"></span>ByLayer`)}
        <span class="gap-s"></span>
        ${this.combo('ltype', html`<span class="rule"></span>ByLayer`)}
        <span class="gap-m"></span>
        ${this.combo('lweight', html`<span class="rule"></span>ByLayer`)}
        <span class="gap-m"></span>
        ${this.combo('plotstyle off', 'ByColor')}
      </div>
      <div class="body">
        <div class="palette left">
          <span class="handle"></span>
          ${DRAW_TOOLS.map(plainTool)}
        </div>
        <div>
          <svg class="canvas" viewBox="22 147 912 441">
            ${this.plan === 'building' ? PLAN_BUILDING : PLAN_CAMPUS}
            ${ucs}
            ${this.plan === 'building' ? cross(831, 413) : cross(850, 416)}
          </svg>
          <div class="tabs">
            ${nav.map((d) => html`<span class="nav"><svg viewBox="0 0 8 7"><path d=${d} fill="#222" stroke="#222" stroke-width=".6"/></svg></span>`)}
            <span class="tab active">Model</span>
            <span class="tab">Layout1</span>
            <span class="tab">Layout2</span>
          </div>
        </div>
        <div class="palette">
          <span class="handle"></span>
          ${MODIFY_TOOLS.map(plainTool)}
          <span class="handle second"></span>
          ${ORDER_TOOLS.map(plainTool)}
        </div>
      </div>
      <div class="strip"></div>
      <div class="dock">
        <span class="grip"></span>
        <div class="cmd">
          <div class="cmd-line first">
            <span class="text">${this.history}</span>
            <span class="scroll">
              <svg viewBox="0 0 10 6"><path d="M2 4l3-3 3 3" fill="none" stroke="#456" stroke-width="1.2"/></svg>
              <svg viewBox="0 0 10 6"><path d="M2 2l3 3 3-3" fill="none" stroke="#456" stroke-width="1.2"/></svg>
            </span>
          </div>
          <div class="cmd-line">
            <span class="text">Command:</span>
            <span class="hscroll">
              <span><svg viewBox="0 0 10 12"><path d="M6 3L3 6l3 3" fill="none" stroke="#2c4a80" stroke-width="1.4"/></svg></span>
              <span class="thumb"></span>
              <span class="pad"></span>
              <span><svg viewBox="0 0 10 12"><path d="M4 3l3 3-3 3" fill="none" stroke="#2c4a80" stroke-width="1.4"/></svg></span>
            </span>
          </div>
        </div>
      </div>
      <div class="status">
        <span class="coords">${this.coords}</span>
        ${STATUS.map(([label, cls, on]) => html`<span class="toggle ${cls} ${on ? 'on' : ''}">${label}</span>`)}
        <span class="tray">${['tray1', 'tray2', 'tray3', 'tray4', 'tray5'].map(plainTool)}</span>
      </div>
      <div class="frame-foot"></div>
    `
  }
}

customElements.define('cad-window', CadWindow)

class AppRoot extends LitElement {
  static styles = css`
    :host {
      display: block;
      width: 960px;
      height: 1668px;
      overflow: hidden;
      background: #fff;
      color: #111;
      font-family: "Liberation Serif", "Times New Roman", serif;
    }

    .page-no {
      height: 71px;
      padding-right: 4px;
      box-sizing: border-box;
      text-align: center;
      font-family: "Liberation Sans", Arial, sans-serif;
      font-size: 20px;
      line-height: 20px;
    }

    .caption {
      height: 188px;
      padding: 44px 0 0 74px;
      box-sizing: border-box;
      text-align: center;
      font-size: 23.9px;
      line-height: 30px;
      white-space: nowrap;
    }

    .caption.last {
      height: 187px;
    }

    .footer {
      font-size: 26.1px;
      font-style: italic;
      line-height: 30px;
      padding-left: 1px;
      white-space: nowrap;
    }
  `

  render() {
    return html`
      <div class="page-no">7</div>
      <cad-window
        file="yol"
        layer="building"
        swatch="green-sw"
        history="Command: '_layer"
        coords="419220.2421, 4546759.0241, 0.0000"
        plan="building"
      ></cad-window>
      <div class="caption">Şekil.13 Yıldız Merkez Kampüsünde ki binaların sayısal ortamdaki görünüşü</div>
      <cad-window
        file="kampus_harita"
        layer="yol"
        swatch="blue-sw"
        history="or Autodesk licensed application."
        coords="419276.3839, 4546747.7741, 0.0000"
        plan="campus"
      ></cad-window>
      <div class="caption last">Şekil.15 Yıldız Merkez Kampüsünün sayısal ortamdaki görünüşü</div>
      <div class="footer">05044074 - Ersen ERDEMLİ Lisans Bitirme Çalışması</div>
    `
  }
}

customElements.define('app-root', AppRoot)
